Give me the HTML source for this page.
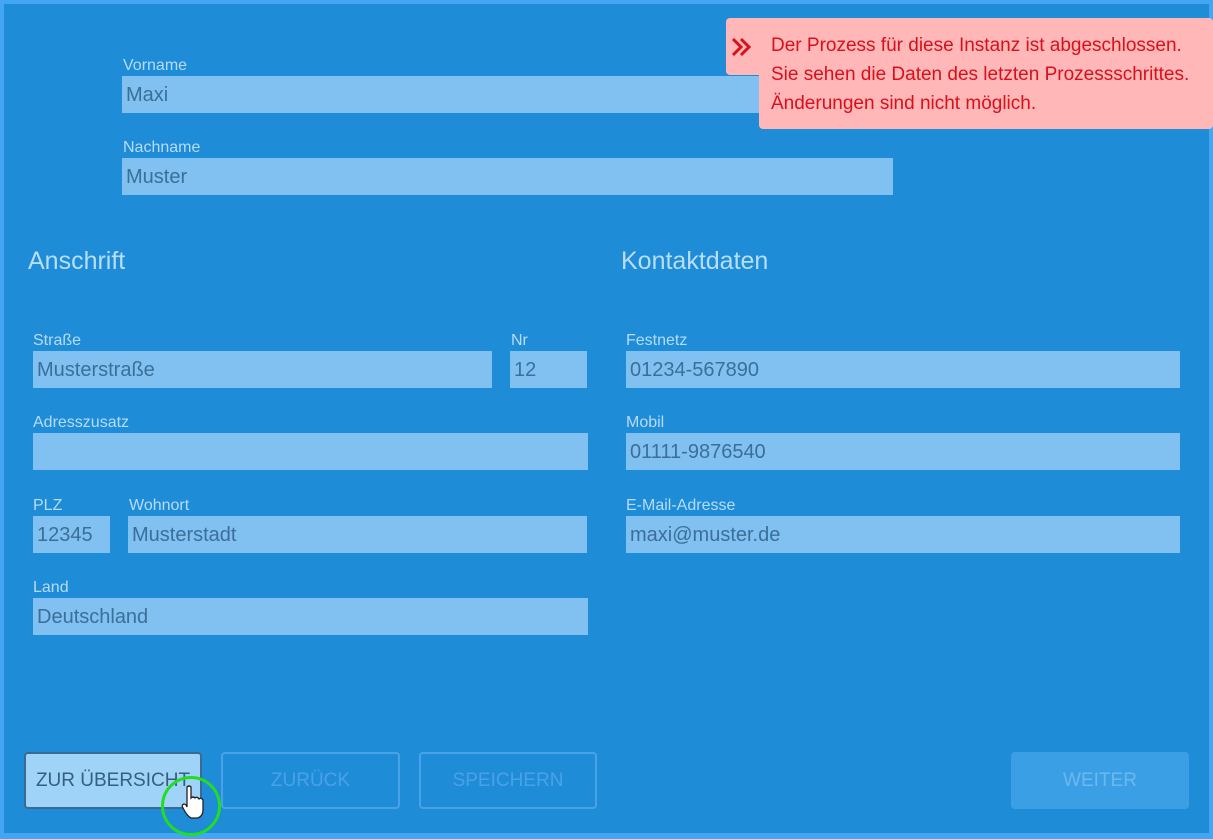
<!DOCTYPE html>
<html><head><meta charset="utf-8"><style>
*{margin:0;padding:0;box-sizing:border-box}
body{width:1213px;height:839px;background:#42a6f2;font-family:"Liberation Sans",sans-serif;position:relative;overflow:hidden}
.main{position:absolute;left:4px;top:4px;width:1205px;height:829px;background:#1f8cd8}
.l{position:absolute;color:#b6dcf7;font-size:16px}
.i{position:absolute;background:#80c1f1;height:37px;color:#3b6f99;font-size:20px;padding:8px 0 0 4px}
.h{position:absolute;color:#b8defa;font-size:25px}
.b{position:absolute;top:752px;height:57px;border:2px solid #4aa2e6;border-radius:4px;color:#4aa2e6;font-size:19px;text-align:center;line-height:53px}
.a{position:absolute;background:#ffb7b7;border-radius:4px}
.t{position:absolute;left:771px;top:31px;color:#d9101c;font-size:19px;line-height:29px}
</style></head><body>
<div class="main"></div>
<div class="l" style="left:123px;top:57px">Vorname</div>
<div class="i" style="left:122px;top:76px;width:771px">Maxi</div>
<div class="l" style="left:123px;top:139px">Nachname</div>
<div class="i" style="left:122px;top:158px;width:771px">Muster</div>
<div class="h" style="left:28px;top:247px">Anschrift</div>
<div class="h" style="left:621px;top:247px">Kontaktdaten</div>
<div class="l" style="left:33px;top:332px">Straße</div>
<div class="i" style="left:33px;top:351px;width:459px">Musterstraße</div>
<div class="l" style="left:511px;top:332px">Nr</div>
<div class="i" style="left:510px;top:351px;width:77px">12</div>
<div class="l" style="left:33px;top:414px">Adresszusatz</div>
<div class="i" style="left:33px;top:433px;width:555px"></div>
<div class="l" style="left:33px;top:497px">PLZ</div>
<div class="i" style="left:33px;top:516px;width:77px">12345</div>
<div class="l" style="left:129px;top:497px">Wohnort</div>
<div class="i" style="left:128px;top:516px;width:459px">Musterstadt</div>
<div class="l" style="left:33px;top:579px">Land</div>
<div class="i" style="left:33px;top:598px;width:555px">Deutschland</div>
<div class="l" style="left:626px;top:332px">Festnetz</div>
<div class="i" style="left:626px;top:351px;width:554px">01234-567890</div>
<div class="l" style="left:626px;top:414px">Mobil</div>
<div class="i" style="left:626px;top:433px;width:554px">01111-9876540</div>
<div class="l" style="left:626px;top:497px">E-Mail-Adresse</div>
<div class="i" style="left:626px;top:516px;width:554px">maxi@muster.de</div>
<div class="b" style="left:24px;width:178px;background:#9fd3f8;border-color:#3a6a8e;color:#355f80">ZUR ÜBERSICHT</div>
<div class="b" style="left:221px;width:179px">ZURÜCK</div>
<div class="b" style="left:419px;width:178px">SPEICHERN</div>
<div class="b" style="left:1011px;width:178px;background:#3b9fe6;border-color:#3b9fe6;color:#6cb8ee">WEITER</div>
<div style="position:absolute;left:161px;top:776px;width:60px;height:60px;border:3px solid #22dd22;border-radius:50%"></div>
<svg style="position:absolute;left:180px;top:784px" width="24" height="36" viewBox="0 0 24 36"><path d="M7 3 q2-2 4 0 v11 q2-2 4 0 q2-2 4 1 q2-2 4 1 v10 q0 6-5 8 h-7 q-4-2-8-10 q-2-3 1-4 q2 0 3 3 z" fill="#fff" stroke="#222" stroke-width="1.3"/></svg>
<div class="a" style="left:726px;top:18px;width:487px;height:57px"></div>
<div class="a" style="left:759px;top:18px;width:454px;height:111px"></div>
<svg style="position:absolute;left:731px;top:37px" width="22" height="20" viewBox="0 0 22 20"><path d="M2 2 l8 8 l-8 8 M10 2 l8 8 l-8 8" fill="none" stroke="#d9101c" stroke-width="3"/></svg>
<div class="t">Der Prozess für diese Instanz ist abgeschlossen.<br>Sie sehen die Daten des letzten Prozessschrittes.<br>Änderungen sind nicht möglich.</div>
</body></html>
